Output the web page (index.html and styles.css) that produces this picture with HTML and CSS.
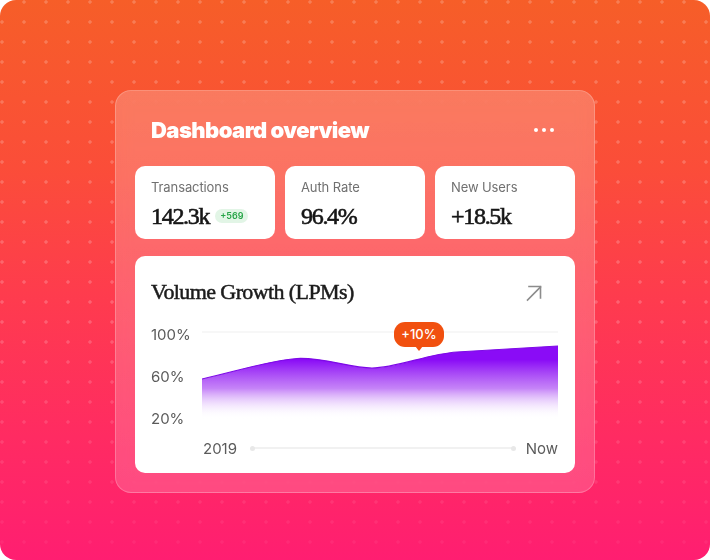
FILE: index.html
```html
<!DOCTYPE html>
<html lang="en">
<head>
<meta charset="utf-8">
<title>Dashboard overview</title>
<link rel="stylesheet" href="styles.css">
</head>
<body>
<div class="stage">
  <section class="panel">
    <header class="panel-head">
      <h1 class="panel-title">Dashboard overview</h1>
      <div class="more" aria-label="More"><span></span><span></span><span></span></div>
    </header>
    <div class="stats">
      <div class="stat">
        <div class="stat-label">Transactions</div>
        <div class="stat-row"><span class="stat-value">142.3k</span><span class="badge">+569</span></div>
      </div>
      <div class="stat">
        <div class="stat-label">Auth Rate</div>
        <div class="stat-row"><span class="stat-value">96.4%</span></div>
      </div>
      <div class="stat">
        <div class="stat-label">New Users</div>
        <div class="stat-row"><span class="stat-value">+18.5k</span></div>
      </div>
    </div>
    <div class="chart-card">
      <div class="chart-head">
        <h2 class="chart-title">Volume Growth (LPMs)</h2>
        <svg class="arrow" width="18" height="18" viewBox="0 0 18 18" fill="none" stroke="#8c8c8c" stroke-width="1.6" stroke-linecap="square">
          <path d="M2.5 16 L15.5 3"/>
          <path d="M4 2.5 H15.5 V14"/>
        </svg>
      </div>
      <div class="chart-body">
        <div class="y-axis">
          <span>100%</span>
          <span>60%</span>
          <span>20%</span>
        </div>
        <div class="plot">
          <svg class="plot-svg" width="356" height="102" viewBox="0 0 356 102" preserveAspectRatio="none">
            <defs>
              <linearGradient id="fillGrad" x1="0" y1="0" x2="0" y2="1">
                <stop offset="0.18" stop-color="#8a0cf6" stop-opacity="1"/>
                <stop offset="0.55" stop-color="#a640f3" stop-opacity="0.65"/>
                <stop offset="0.95" stop-color="#ffffff" stop-opacity="0"/>
              </linearGradient>
            </defs>
            <line x1="0" y1="6" x2="356" y2="6" stroke="#efefef" stroke-width="1.2"/>
            <path d="M0 53 C 35 45, 70 34, 95 32.5 C 120 31, 148 42, 170 42 C 195 42, 225 28, 255 26 L 356 20 L 356 97 L 0 97 Z" fill="url(#fillGrad)"/>
            <path d="M0 53 C 35 45, 70 34, 95 32.5 C 120 31, 148 42, 170 42 C 195 42, 225 28, 255 26 L 356 20" fill="none" stroke="#7d0ae6" stroke-width="1.2"/>
          </svg>
          <div class="tip">+10%</div>
        </div>
        <div></div>
        <div class="x-axis">
          <span>2019</span>
          <span class="x-line"></span>
          <span>Now</span>
        </div>
      </div>
    </div>
  </section>
</div>
</body>
</html>
```
FILE: styles.css
```css
* { box-sizing: border-box; }
html, body { margin: 0; padding: 0; background: #ffffff; }
body { font-family: "Inter", "Liberation Sans", sans-serif; }

.stage {
  position: relative;
  width: 710px;
  height: 560px;
  border-radius: 16px;
  overflow: hidden;
  background: linear-gradient(180deg, #f65e28 0%, #fb4d39 30%, #fe3c4d 52%, #ff2b62 78%, #ff1e71 100%);
  display: flex;
  justify-content: center;
  align-items: flex-start;
  padding-top: 90px;
}
.stage::before {
  content: "";
  position: absolute;
  inset: 0;
  background-image: radial-gradient(circle, rgba(255,255,255,0.2) 1.4px, rgba(255,255,255,0) 2px);
  background-size: 22px 20px;
  background-position: -9px -8px;
  -webkit-mask-image: linear-gradient(180deg, #000 0%, #000 55%, rgba(0,0,0,0.2) 100%);
  mask-image: linear-gradient(180deg, #000 0%, #000 55%, rgba(0,0,0,0.2) 100%);
}

.panel {
  position: relative;
  z-index: 1;
  width: 480px;
  padding: 19px;
  border-radius: 16px;
  background: linear-gradient(180deg, rgba(255,255,255,0.22), rgba(255,255,255,0.17));
  border: 1px solid rgba(255,255,255,0.22);
  -webkit-backdrop-filter: blur(8px);
  backdrop-filter: blur(8px);
  display: flex;
  flex-direction: column;
}

.panel-head {
  height: 40px;
  margin: 0 0 16px;
  padding: 0 21px 0 16px;
  display: flex;
  align-items: center;
  justify-content: space-between;
}
.panel-title {
  margin: 0;
  color: #ffffff;
  font-family: "Inter", "Liberation Sans", sans-serif;
  font-weight: 900;
  font-size: 22px;
  line-height: 28px;
  letter-spacing: -0.55px;
}
.more { display: flex; gap: 4px; }
.more span { width: 4px; height: 4px; border-radius: 50%; background: #ffffff; }

.stats {
  display: grid;
  grid-template-columns: repeat(3, 1fr);
  gap: 10px;
  margin-bottom: 17px;
}
.stat {
  background: #ffffff;
  border-radius: 10px;
  height: 73px;
  padding: 13px 16px 9px;
}
.stat-label {
  font-size: 13px;
  line-height: 16px;
  color: #707070;
  letter-spacing: -0.1px;
}
.stat-row {
  margin-top: 7px;
  display: flex;
  align-items: center;
  gap: 6px;
}
.stat-value {
  font-family: "Liberation Serif", "DejaVu Serif", serif;
  font-size: 24px;
  line-height: 28px;
  color: #161616;
  letter-spacing: -1.3px;
  -webkit-text-stroke: 0.6px #161616;
}
.badge {
  height: 14px;
  padding: 0 5px;
  border-radius: 7px;
  background: #e2f5e6;
  color: #27a548;
  font-size: 9px;
  font-weight: 600;
  line-height: 14px;
  margin-top: -1px;
}

.chart-card {
  background: #ffffff;
  border-radius: 10px;
  height: 217px;
  padding: 22px 16px 15px;
}
.chart-head {
  display: flex;
  justify-content: space-between;
  align-items: center;
  height: 28px;
  margin-bottom: 20px;
}
.chart-title {
  margin: 0;
  font-family: "Liberation Serif", "DejaVu Serif", serif;
  font-weight: 400;
  font-size: 22px;
  line-height: 28px;
  color: #1c1c1c;
  letter-spacing: -0.6px;
  -webkit-text-stroke: 0.5px #1c1c1c;
}
.arrow { margin-right: 16px; margin-top: 1px; }

.chart-body {
  display: grid;
  grid-template-columns: 51px 356px;
  grid-template-rows: 102px 18px;
  row-gap: 12px;
}
.y-axis {
  display: flex;
  flex-direction: column;
  justify-content: space-between;
  font-size: 15px;
  line-height: 18px;
  color: #5b5b5b;
}
.plot { position: relative; }
.plot-svg { display: block; }
.tip {
  position: absolute;
  left: 192px;
  top: -4px;
  width: 50px;
  height: 25px;
  border-radius: 11px;
  background: #f1500f;
  color: #ffffff;
  font-size: 13px;
  font-weight: 500;
  line-height: 25px;
  text-align: center;
}
.tip::after {
  content: "";
  position: absolute;
  left: 21px;
  bottom: -4px;
  border-left: 4px solid transparent;
  border-right: 4px solid transparent;
  border-top: 5px solid #f1500f;
}
.x-axis {
  display: flex;
  align-items: center;
  font-size: 15px;
  line-height: 18px;
  color: #5b5b5b;
  padding-left: 1px;
}
.x-line {
  flex: 1;
  height: 2px;
  margin: 0 12px 0 15px;
  background: #f1f1f1;
  position: relative;
  top: -1px;
}
.x-line::before, .x-line::after {
  content: "";
  position: absolute;
  top: -1.5px;
  width: 5px;
  height: 5px;
  border-radius: 50%;
  background: #e8e8e8;
}
.x-line::before { left: -2px; }
.x-line::after { right: -2px; }
```
